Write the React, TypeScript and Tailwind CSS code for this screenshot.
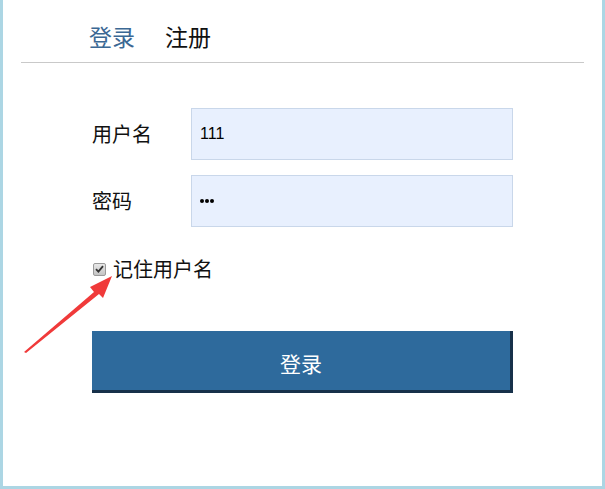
import React from "react";

export default function App() {
  const cjk = { fontFamily: '"Microsoft YaHei", "Noto Sans CJK SC", "Noto Sans", sans-serif' };
  return (
    <div
      className="relative w-[605px] h-[489px] bg-white border-l-[3px] border-r-[3px] border-b-[3px] border-[#acd6e4] overflow-hidden"
      style={cjk}
    >
      <div className="mx-[18px] border-b border-[#c9c9c9] h-[63px] flex items-end">
        <div className="flex pl-[68px] pb-[11px] gap-[30px] text-[23px] leading-[30px]">
          <span className="text-[#3b6894]">登录</span>
          <span className="text-[#111]">注册</span>
        </div>
      </div>

      <div className="pl-[89px] pt-[45px] w-[513px] box-content">
        <div className="flex flex-col gap-[15px]">
          <div className="flex items-center h-[52px]">
            <label className="w-[99px] text-[20px] text-[#111]">用户名</label>
            <input
              readOnly
              value="111"
              className="w-[322px] h-[52px] bg-[#e8f0fe] border border-[#c9d7ea] pl-[8px] text-[16px] text-black outline-none"
              style={{ fontFamily: '"Liberation Sans", Arial, sans-serif' }}
            />
          </div>
          <div className="flex items-center h-[52px]">
            <label className="w-[99px] text-[20px] text-[#111]">密码</label>
            <div className="w-[322px] h-[52px] bg-[#e8f0fe] border border-[#c9d7ea] pl-[8px] flex items-center gap-[1px]">
              <span className="w-[4px] h-[4px] rounded-full bg-black" />
              <span className="w-[4px] h-[4px] rounded-full bg-black" />
              <span className="w-[4px] h-[4px] rounded-full bg-black" />
            </div>
          </div>
        </div>

        <div className="flex items-center mt-[31px] h-[22px]">
          <span className="ml-[1px] w-[13px] h-[13px] rounded-[2px] border border-[#9a9a9a] bg-gradient-to-b from-[#e8e8e8] to-[#c4c4c4] flex items-center justify-center">
            <svg width="9" height="8" viewBox="0 0 9 8">
              <path d="M1 4.2 L3.4 6.6 L8 1.2" fill="none" stroke="#333" strokeWidth="1.8" />
            </svg>
          </span>
          <span className="ml-[7px] text-[20px] text-[#111] leading-[22px]">记住用户名</span>
        </div>

        <button
          className="mt-[51px] w-[421px] h-[62px] bg-[#2e6a9c] border-r-[3px] border-b-[3px] border-[#17314a] text-white text-[21px] flex items-center justify-center pt-[6px]"
          style={cjk}
        >
          登录
        </button>
      </div>

      <svg className="absolute left-0 top-0 pointer-events-none" width="605" height="489">
        <path d="M21 352 L91 292 L87 287 L109 276 L100 298 L96 294 L23 353 Z" fill="#f03a3a" />
      </svg>
    </div>
  );
}
